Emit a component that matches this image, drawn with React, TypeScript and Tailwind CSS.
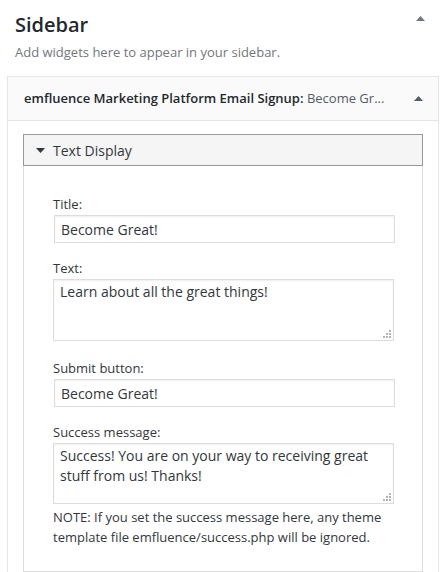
const font = { fontFamily: '"Open Sans", "Liberation Sans", sans-serif' }

function Arrow({ dir = "up", className = "" }: { dir?: "up" | "down"; className?: string }) {
    return (
        <svg width="9" height="5" viewBox="0 0 9 5" className={className}>
            {dir === "up" ? <path d="M0 5 L4.5 0 L9 5 Z" fill="currentColor" /> : <path d="M0 0 L4.5 5 L9 0 Z" fill="currentColor" />}
        </svg>
    )
}

function ResizeDots() {
    const dots = [
        [6, 0],
        [3, 3], [6, 3],
        [0, 6], [3, 6], [6, 6],
    ]
    return (
        <svg width="8" height="8" viewBox="0 0 8 8" className="absolute right-[3px] bottom-[3px] pointer-events-none">
            {dots.map(([x, y], i) => (
                <rect key={i} x={x} y={y} width="2" height="2" fill="#b4b4b4" />
            ))}
        </svg>
    )
}

function Field({ label, value, area = false, rows = 62, top = "mt-[15px]" }: { label: string; value: string; area?: boolean; rows?: number; top?: string }) {
    return (
        <div className={top}>
            <label className="block text-[13px] leading-[19px] text-[#32373c]">{label}</label>
            {area ? (
                <div className="relative mt-[1px] w-[341px]" style={{ height: rows }}>
                    <textarea
                        readOnly
                        defaultValue={value}
                        className="block w-full h-full resize-none border border-[#ddd] shadow-[inset_0_1px_2px_rgba(0,0,0,0.07)] px-[6px] py-[2px] text-[14px] leading-[20px] text-[#32373c] outline-none"
                        style={font}
                    />
                    <ResizeDots />
                </div>
            ) : (
                <input
                    readOnly
                    defaultValue={value}
                    className="block mt-[1px] ml-px w-[341px] h-[28px] border border-[#ddd] shadow-[inset_0_1px_2px_rgba(0,0,0,0.07)] px-[6px] text-[14px] text-[#32373c] outline-none"
                    style={font}
                />
            )}
        </div>
    )
}

function App() {
    return (
        <div className="w-[446px] h-[572px] overflow-hidden bg-white px-[7px]" style={font}>
            {/* Sidebar heading */}
            <div className="flex items-center justify-between pl-[8px] pr-[14px] pt-[11px]">
                <h2 className="text-[20px] leading-[28px] font-semibold text-[#23282d]">Sidebar</h2>
                <Arrow className="text-[#72777c] -mt-[14px]" />
            </div>
            <p className="pl-[8px] mt-[3px] text-[13px] leading-[20px] text-[#72777c]">Add widgets here to appear in your sidebar.</p>

            {/* Widget */}
            <div className="mt-[14px] border border-[#e5e5e5] h-[600px]">
                <div className="flex items-center justify-between h-[44px] bg-[#fafafa] border-b border-[#e5e5e5] pl-[16px] pr-[15px]">
                    <h3 className="text-[13px] font-semibold text-[#23282d] whitespace-nowrap">
                        emfluence Marketing Platform Email Signup: <span className="font-normal text-[#555d66]">Become Gr...</span>
                    </h3>
                    <Arrow className="text-[#555d66]" />
                </div>

                <div className="px-[15px] pt-[13px]">
                    <div className="flex items-center h-[32px] border border-[#999] bg-[#f5f5f5] pl-[12px]">
                        <Arrow dir="down" className="text-[#32373c] mr-[8px]" />
                        <span className="text-[14px] text-[#32373c]">Text Display</span>
                    </div>
                    <div className="border border-t-0 border-[#ddd] pl-[29px] pr-[27px] pt-[29px] pb-[24px]">
                        <Field label="Title:" value="Become Great!" top="" />
                        <Field label="Text:" value="Learn about all the great things!" area rows={62} top="mt-[16px]" />
                        <Field label="Submit button:" value="Become Great!" top="mt-[18px]" />
                        <Field label="Success message:" value="Success! You are on your way to receiving great stuff from us! Thanks!" area rows={61} top="mt-[16px]" />
                        <p className="mt-[3px] text-[13px] leading-[20px] text-[#32373c]">
                            NOTE: If you set the success message here, any theme template file emfluence/success.php will be ignored.
                        </p>
                    </div>
                </div>
            </div>
        </div>
    )
}

export default App
